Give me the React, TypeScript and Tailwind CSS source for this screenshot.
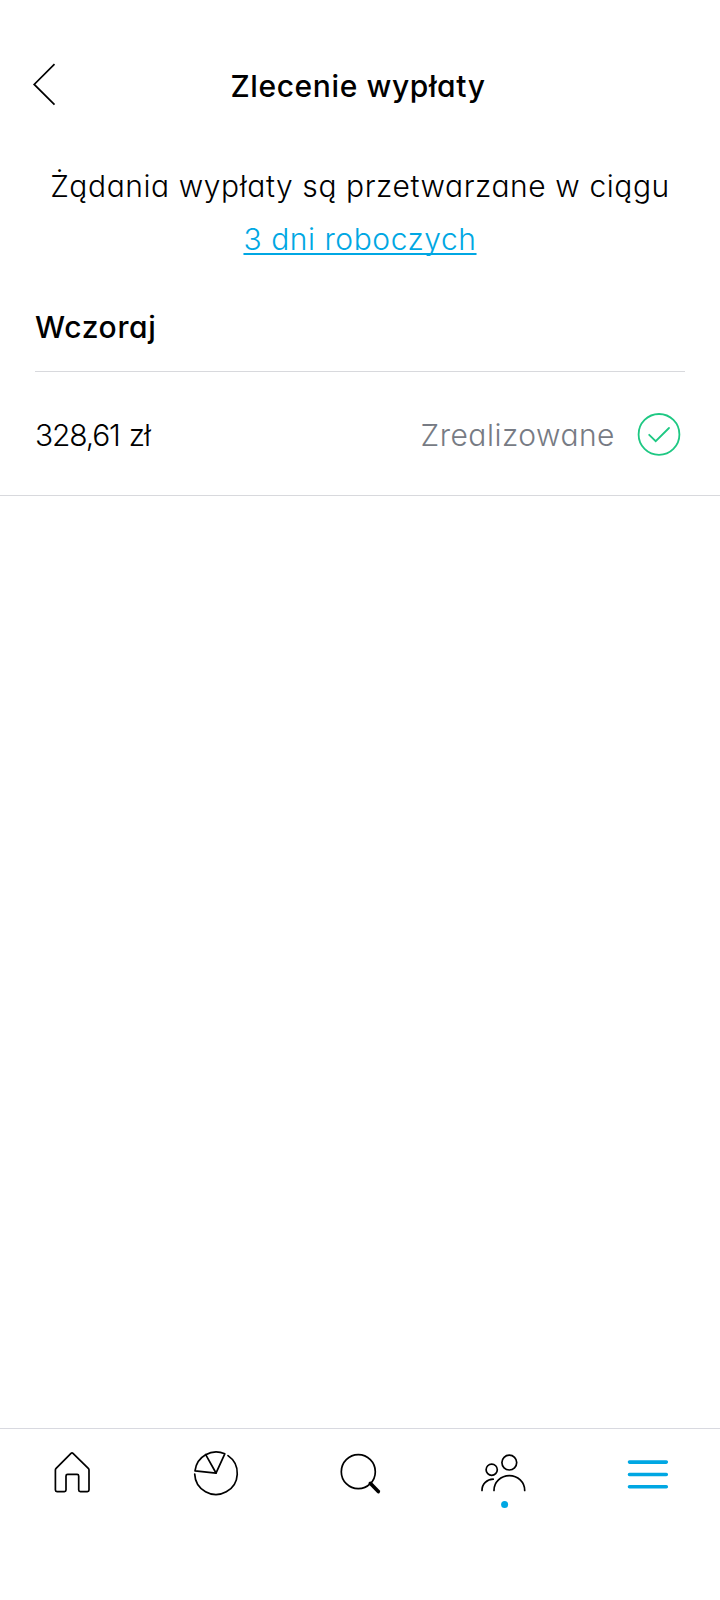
import type { ReactNode } from "react";

interface NavItem {
  label: string;
  active?: boolean;
  icon: ReactNode;
}

interface Payout {
  amount: string;
  status: string;
}

const payouts: Payout[] = [{ amount: "328,61 zł", status: "Zrealizowane" }];

const navItems: NavItem[] = [
  {
    label: "Start",
    icon: (
      <path d="M29 13.4 L14.1 28.4 Q13.4 29.1 13.4 30.1 V50.1 Q13.4 51.7 15 51.7 H22.4 Q24 51.7 24 50.1 V35.9 Q24 34.3 25.6 34.3 H35.1 Q36.7 34.3 36.7 35.9 V50.1 Q36.7 51.7 38.3 51.7 H45.4 Q47 51.7 47 50.1 V30.1 Q47 29.1 46.3 28.4 L31 13.4 Q30 12.4 29 13.4 Z" />
    ),
  },
  {
    label: "Portfel",
    icon: (
      <>
        <path d="M30 33.2 L9 30.8 A21.3 21.3 0 0 1 38.8 13.8 Z" />
        <path d="M30 33 L19.7 14.6" />
        <path d="M42 15.6 A21.3 21.3 0 1 1 8.7 34" />
      </>
    ),
  },
  {
    label: "Szukaj",
    icon: (
      <>
        <circle cx="28.3" cy="31.7" r="17" />
        <path d="M40.3 43.3 L48.3 51.6" strokeWidth="3.6" />
      </>
    ),
  },
  {
    label: "Społeczność",
    icon: (
      <>
        <circle cx="35.3" cy="22.6" r="7.4" />
        <circle cx="17.7" cy="29.7" r="5.6" />
        <path d="M20 50.4 A15.35 14.8 0 0 1 50.7 50.4" />
        <path d="M8 50.4 C8 44 13 39.4 19.2 39.2" />
        <circle cx="30.6" cy="64.6" r="3.5" fill="#00a7e3" stroke="none" />
      </>
    ),
  },
  {
    label: "Menu",
    active: true,
    icon: <path d="M11.5 22.1 H48.3 M11.5 34.5 H48.3 M11.5 46.8 H48.3" strokeWidth="3.6" />,
  },
];

function Header() {
  return (
    <header className="grid h-[148px] grid-cols-[72px_1fr_76px] items-start pt-[60px]">
      <button aria-label="Wstecz" className="pl-[30px]">
        <svg width="30" height="50" viewBox="0 0 30 50" fill="none" stroke="black" strokeWidth="1.7">
          <path d="M24.5 4.2 L4.2 24.4 L24.5 44.6" />
        </svg>
      </button>
      <h1 className="pt-[2px] text-center text-[30px] leading-[48px] font-medium tracking-[0.6px]">
        Zlecenie wypłaty
      </h1>
    </header>
  );
}

function PayoutRow({ payout }: { payout: Payout }) {
  return (
    <div className="flex h-[124px] items-center border-b border-[#d8d9dd] pr-[39px] pl-[35px]">
      <span className="pt-0.5 text-[30px] leading-[48px] font-light tracking-[-1.2px] [word-spacing:2px]">
        {payout.amount}
      </span>
      <span className="ml-auto pt-0.5 text-[30px] leading-[48px] font-light tracking-[0.5px] text-[#777b84]">
        {payout.status}
      </span>
      <svg
        className="ml-[22px]"
        width="44"
        height="44"
        viewBox="0 0 44 44"
        fill="none"
        stroke="#1ec883"
        strokeWidth="1.8"
        strokeLinecap="round"
      >
        <circle cx="22" cy="22.4" r="20.4" />
        <path d="M12.2 22.8 L18.7 29.2 L32 16" />
      </svg>
    </div>
  );
}

function BottomNav() {
  return (
    <nav className="mt-auto grid h-[172px] grid-cols-5 items-start border-t border-[#d8d9e0] pt-[11px]">
      {navItems.map((item) => (
        <button key={item.label} aria-label={item.label} className="flex justify-center">
          <svg
            width="60"
            height="70"
            viewBox="0 0 60 70"
            fill="none"
            stroke={item.active ? "#00a7e3" : "black"}
            strokeWidth="1.7"
            strokeLinecap="round"
            strokeLinejoin="round"
          >
            {item.icon}
          </svg>
        </button>
      ))}
    </nav>
  );
}

export default function App() {
  return (
    <div className="flex h-[1600px] w-[720px] flex-col bg-white font-['Inter',sans-serif] text-black [font-feature-settings:'cv11']">
      <Header />
      <p className="pt-[12px] text-center text-[30px] leading-[53px] font-light">
        <span className="block tracking-[0.58px]">Żądania wypłaty są przetwarzane w ciągu</span>
        <a className="tracking-[0.55px] text-[#00a7e3] underline decoration-[1.5px] underline-offset-[3px] [text-decoration-skip-ink:none]">
          3 dni roboczych
        </a>
      </p>
      <h2 className="mx-[35px] mt-[37px] h-[69px] border-b border-[#d8d9dd] text-[30px] leading-[48px] font-medium tracking-[0.65px]">
        Wczoraj
      </h2>
      {payouts.map((payout) => (
        <PayoutRow key={payout.amount} payout={payout} />
      ))}
      <BottomNav />
    </div>
  );
}
